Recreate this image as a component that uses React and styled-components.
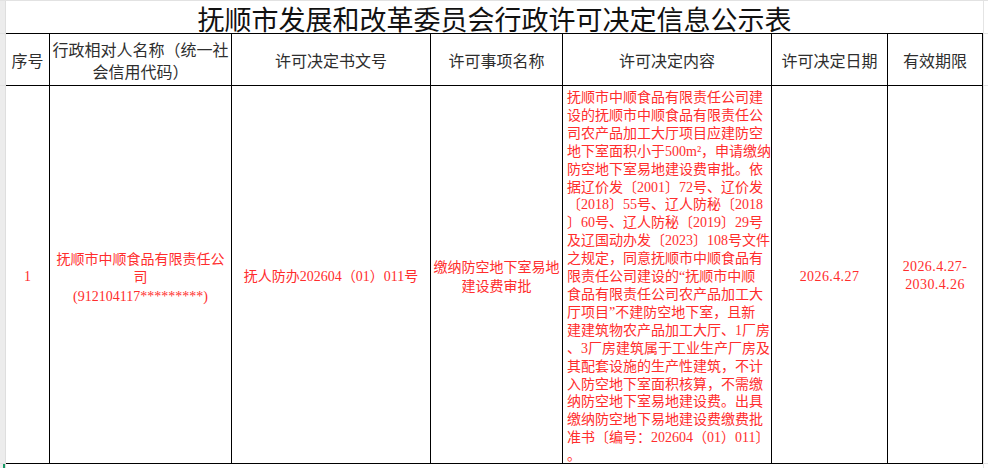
import React from "react"
import styled, { createGlobalStyle } from "styled-components"

const GlobalStyle = createGlobalStyle`
  html, body {
    margin: 0;
    padding: 0;
    background: #fff;
  }
`

const cjk = `"Noto Sans CJK SC", "Noto Sans", sans-serif`
const mixed = `"Liberation Serif", "Noto Sans CJK SC", serif`

const Sheet = styled.div`
  display: flex;
  width: 988px;
  height: 468px;
  overflow: hidden;
  border-top: 1px solid #e2e2e2;
  box-sizing: border-box;
`

const Gutter = styled.div`
  display: flex;
  flex-direction: column;
  width: 6px;
  flex-shrink: 0;
  background: #ececec;
  border-right: 1px solid #dedede;
  box-sizing: border-box;
`

const GutterCell = styled.div`
  height: ${p => p.h}px;
  border-bottom: 1px solid #e0e0e0;
  box-sizing: border-box;
`

const Marker = styled.div`
  flex: 1;
  align-self: flex-end;
  width: 2px;
  background: #1a9a67;
`

const Board = styled.div`
  display: flex;
  flex-direction: column;
  width: 977px;
  flex-shrink: 0;
`

const Grid = styled.div`
  display: grid;
  grid-template-columns: 44px 182px 199px 132px 209px 116px 95px;
  grid-template-rows: 33px 52px 378px;
`

const Title = styled.div`
  grid-column: 1 / 8;
  display: flex;
  align-items: center;
  justify-content: center;
  border-bottom: 1px solid #000;
  font-family: ${cjk};
  font-size: 27px;
  color: #111;
  line-height: 1;
  padding-top: 3px;
  box-sizing: border-box;
`

const Cell = styled.div`
  display: flex;
  flex-direction: column;
  align-items: center;
  justify-content: center;
  text-align: center;
  border-right: 1px solid #000;
  border-bottom: 1px solid #000;
  box-sizing: border-box;
  min-width: 0;
`

const HeadCell = styled(Cell)`
  font-family: ${cjk};
  font-size: 16px;
  line-height: 22px;
  color: #2e2e2e;
`

const DataCell = styled(Cell)`
  font-family: ${mixed};
  font-size: 14px;
  line-height: 18.5px;
  color: #ff2d2d;
  padding-top: ${p => p.$shift || 3}px;
`

const DateText = styled.div`
  white-space: nowrap;
  letter-spacing: 0.4px;
`

const ContentCell = styled(DataCell)`
  align-items: flex-start;
  justify-content: flex-start;
  text-align: left;
  padding: 3px 0 0 4px;
  line-height: 17.9px;
  overflow: visible;
`

const Line = styled.div`
  white-space: nowrap;
`

const Bottom = styled.div`
  flex: 1;
`

const Margin = styled.div`
  flex: 1;
  display: flex;
  flex-direction: column;
  border-left: 1px solid #e4e4e4;
`

const MarginCell = styled.div`
  height: ${p => p.h}px;
  border-bottom: 1px solid #e4e4e4;
  box-sizing: border-box;
`

const headers = [
  "序号",
  ["行政相对人名称（统一社", "会信用代码）"],
  "许可决定书文号",
  "许可事项名称",
  "许可决定内容",
  "许可决定日期",
  "有效期限",
]

const contentLines = [
  "抚顺市中顺食品有限责任公司建",
  "设的抚顺市中顺食品有限责任公",
  "司农产品加工大厅项目应建防空",
  "地下室面积小于500m²，申请缴纳",
  "防空地下室易地建设费审批。依",
  "据辽价发〔2001〕72号、辽价发",
  "〔2018〕55号、辽人防秘〔2018",
  "〕60号、辽人防秘〔2019〕29号",
  "及辽国动办发〔2023〕108号文件",
  "之规定，同意抚顺市中顺食品有",
  "限责任公司建设的“抚顺市中顺",
  "食品有限责任公司农产品加工大",
  "厅项目”不建防空地下室，且新",
  "建建筑物农产品加工大厅、1厂房",
  "、3厂房建筑属于工业生产厂房及",
  "其配套设施的生产性建筑，不计",
  "入防空地下室面积核算，不需缴",
  "纳防空地下室易地建设费。出具",
  "缴纳防空地下易地建设费缴费批",
  "准书〔编号：202604（01）011〕",
  "。",
]

const Lines = ({ items, as }) =>
  items.map((t, i) => (
    <Line key={i} as={as}>
      {t}
    </Line>
  ))

export default function App() {
  return (
    <>
      <GlobalStyle />
      <Sheet>
        <Gutter>
          <GutterCell h={33} />
          <GutterCell h={52} />
          <GutterCell h={378} />
          <Marker />
        </Gutter>
        <Board>
          <Grid>
            <Title>抚顺市发展和改革委员会行政许可决定信息公示表</Title>

            {headers.map((h, i) => (
              <HeadCell key={i}>
                {Array.isArray(h) ? <Lines items={h} /> : h}
              </HeadCell>
            ))}

            <DataCell $shift={6}>1</DataCell>
            <DataCell $shift={8}>
              <Lines
                items={[
                  "抚顺市中顺食品有限责任公",
                  "司",
                  "(912104117*********)",
                ]}
              />
            </DataCell>
            <DataCell $shift={6}>抚人防办202604（01）011号</DataCell>
            <DataCell $shift={6}>
              <Lines items={["缴纳防空地下室易地", "建设费审批"]} />
            </DataCell>
            <ContentCell>
              <Lines items={contentLines} />
            </ContentCell>
            <DataCell $shift={6}>
              <DateText>2026.4.27</DateText>
            </DataCell>
            <DataCell $shift={3}>
              <DateText>2026.4.27-</DateText>
              <DateText>2030.4.26</DateText>
            </DataCell>
          </Grid>
          <Bottom />
        </Board>
        <Margin>
          <MarginCell h={33} />
          <MarginCell h={52} />
          <MarginCell h={378} />
        </Margin>
      </Sheet>
    </>
  )
}
